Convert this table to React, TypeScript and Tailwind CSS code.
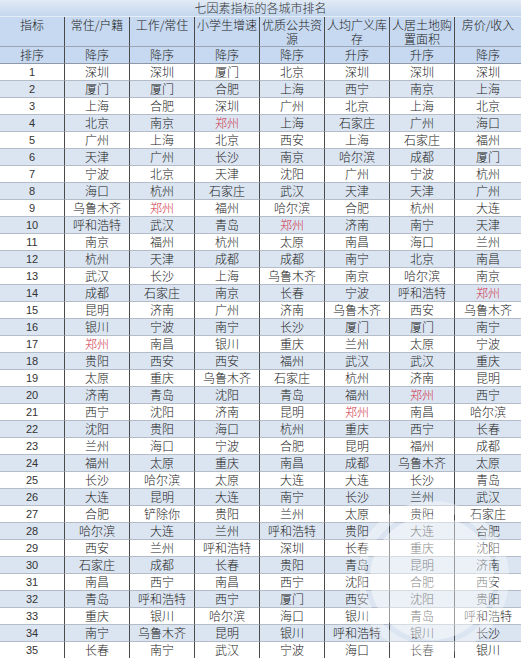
const headers = ["指标", "常住/户籍", "工作/常住", "小学生增速", "优质公共资源", "人均广义库存", "人居土地购置面积", "房价/收入"];
const sorts = ["排序", "降序", "降序", "降序", "降序", "升序", "升序", "降序"];

const rows: string[][] = [
  ["深圳", "深圳", "厦门", "北京", "深圳", "深圳", "深圳"],
  ["厦门", "厦门", "合肥", "上海", "西宁", "南京", "上海"],
  ["上海", "合肥", "深圳", "广州", "北京", "上海", "北京"],
  ["北京", "南京", "郑州", "上海", "石家庄", "广州", "海口"],
  ["广州", "上海", "北京", "西安", "上海", "石家庄", "福州"],
  ["天津", "广州", "长沙", "南京", "哈尔滨", "成都", "厦门"],
  ["宁波", "北京", "天津", "沈阳", "广州", "宁波", "杭州"],
  ["海口", "杭州", "石家庄", "武汉", "天津", "天津", "广州"],
  ["乌鲁木齐", "郑州", "福州", "哈尔滨", "合肥", "杭州", "大连"],
  ["呼和浩特", "武汉", "青岛", "郑州", "济南", "南宁", "天津"],
  ["南京", "福州", "杭州", "太原", "南昌", "海口", "兰州"],
  ["杭州", "天津", "成都", "成都", "南宁", "北京", "南昌"],
  ["武汉", "长沙", "上海", "乌鲁木齐", "南京", "哈尔滨", "南京"],
  ["成都", "石家庄", "南京", "长春", "宁波", "呼和浩特", "郑州"],
  ["昆明", "济南", "广州", "济南", "乌鲁木齐", "西安", "乌鲁木齐"],
  ["银川", "宁波", "南宁", "长沙", "厦门", "厦门", "南宁"],
  ["郑州", "南昌", "银川", "重庆", "兰州", "太原", "宁波"],
  ["贵阳", "西安", "西安", "福州", "武汉", "武汉", "重庆"],
  ["太原", "重庆", "乌鲁木齐", "石家庄", "杭州", "济南", "昆明"],
  ["济南", "青岛", "沈阳", "青岛", "福州", "郑州", "西宁"],
  ["西宁", "沈阳", "济南", "昆明", "郑州", "南昌", "哈尔滨"],
  ["沈阳", "贵阳", "海口", "杭州", "重庆", "西宁", "长春"],
  ["兰州", "海口", "宁波", "合肥", "昆明", "福州", "成都"],
  ["福州", "太原", "重庆", "南昌", "成都", "乌鲁木齐", "太原"],
  ["长沙", "哈尔滨", "太原", "大连", "大连", "长沙", "青岛"],
  ["大连", "昆明", "大连", "南宁", "长沙", "兰州", "武汉"],
  ["合肥", "铲除你", "贵阳", "兰州", "太原", "贵阳", "石家庄"],
  ["哈尔滨", "大连", "兰州", "呼和浩特", "贵阳", "大连", "合肥"],
  ["西安", "兰州", "呼和浩特", "深圳", "长春", "重庆", "沈阳"],
  ["石家庄", "成都", "长春", "贵阳", "青岛", "昆明", "济南"],
  ["南昌", "西宁", "南昌", "西宁", "沈阳", "合肥", "西安"],
  ["青岛", "呼和浩特", "西宁", "厦门", "西安", "沈阳", "贵阳"],
  ["重庆", "银川", "哈尔滨", "海口", "银川", "青岛", "呼和浩特"],
  ["南宁", "乌鲁木齐", "昆明", "银川", "呼和浩特", "银川", "长沙"],
  ["长春", "南宁", "武汉", "宁波", "海口", "长春", "银川"],
];

const font = { fontFamily: '"Noto Sans CJK SC", "Liberation Sans", sans-serif' };

export default function App() {
  return (
    <main className="relative w-[521px] overflow-hidden bg-white text-[12px] font-light leading-none text-[#222]" style={font}>
      {/* title */}
      <div className="flex h-[17px] items-center justify-center border-b border-[#e4ecf6] bg-gradient-to-b from-[#e2ebf6] to-[#c4d7ee] text-[#333]">
        七因素指标的各城市排名
      </div>

      {/* header */}
      <div className="grid grid-cols-[65px_65px_65px_65px_65px_65px_65px_66px] bg-[#c6d9f0]">
        {headers.map((h, i) => (
          <div
            key={h}
            className={`h-[30px] overflow-hidden border-b border-[#9aa6b6] pt-px text-center leading-[14px] break-all ${i < 7 ? "border-r border-r-[#4a4a4a]" : ""}`}
          >
            {h}
          </div>
        ))}
        {sorts.map((s, i) => (
          <div
            key={i}
            className={`flex h-[17px] items-center justify-center border-b border-[#8e98a6] ${i < 7 ? "border-r border-r-[#4a4a4a]" : ""}`}
          >
            {s}
          </div>
        ))}
      </div>

      {/* body */}
      {rows.map((r, ri) => (
        <div
          key={ri}
          className={`grid grid-cols-[65px_65px_65px_65px_65px_65px_65px_66px] ${ri % 2 === 1 ? "bg-[#dbe5f1]" : "bg-white"}`}
        >
          <div className="flex h-[17px] items-center justify-center border-b border-r border-b-[#b4bcc8] border-r-[#4a4a4a] text-[11px] text-[#333]" style={{ fontFamily: '"Liberation Sans", sans-serif' }}>
            {ri + 1}
          </div>
          {r.map((c, ci) => (
            <div
              key={ci}
              className={`flex h-[17px] items-center justify-center border-b border-b-[#b4bcc8] ${ci < 6 ? "border-r border-r-[#4a4a4a]" : ""} ${c === "郑州" ? "text-[#d0304a]" : ""}`}
            >
              {c}
            </div>
          ))}
        </div>
      ))}

      {/* faint watermark */}
      <svg className="pointer-events-none absolute left-[360px] top-[500px]" width="161" height="158" viewBox="0 0 161 158">
        <circle cx="72" cy="78" r="62" fill="white" fillOpacity="0.45" />
        <circle cx="72" cy="78" r="72" fill="none" stroke="white" strokeOpacity="0.35" strokeWidth="10" />
      </svg>
    </main>
  );
}
